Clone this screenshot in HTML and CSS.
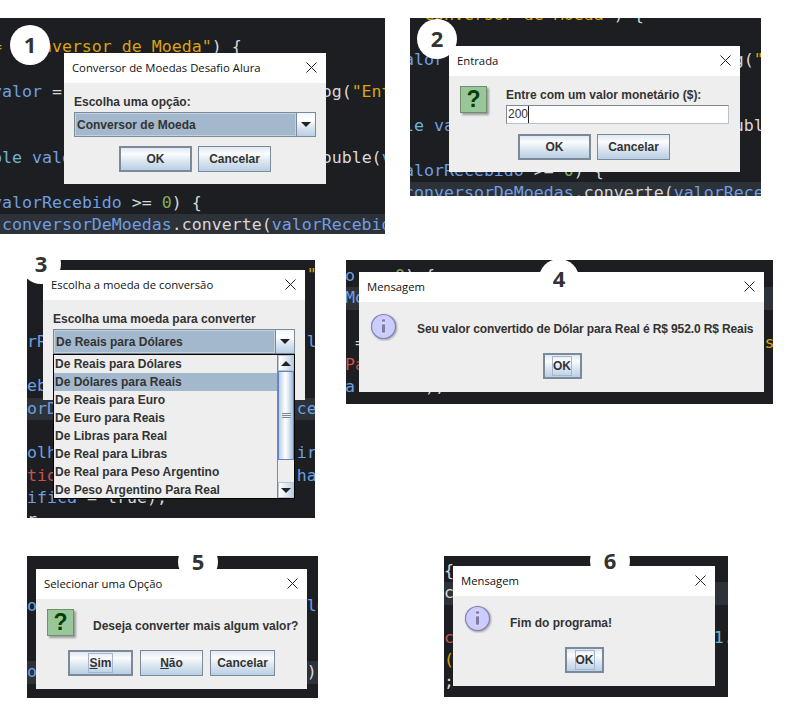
FILE: index.html
```html
<!DOCTYPE html>
<html lang="pt-BR">
<head>
    <meta charset="UTF-8">
    <meta name="viewport" content="width=device-width, initial-scale=1.0">
    <title>Conversor de Moedas - Passo a passo</title>
    <link rel="stylesheet" href="styles.css">
</head>
<body>
    <div class="row row-1">
        <!-- Passo 1 -->
        <div class="shot shot-1">
            <div class="code"><pre><span class="str">   == "Conversor de Moeda"</span>) {

    <span class="var">valor</span> = JOptionPane.showInputDialog(<span class="str">"Entre com um valor"</span>);


 <span class="kw">double</span> <span class="var">valorRecebido</span> = Double.parseDouble(<span class="var">valor</span>);

if (<span class="var">valorRecebido</span> &gt;= <span class="num">0</span>) {
<span class="hl">     <span class="var">conversorDeMoedas</span>.converte(<span class="var">valorRecebido</span>);</span></pre></div>
            <div class="badge">1</div>
            <div class="dialog">
                <div class="titlebar">
                    <span>Conversor de Moedas Desafio Alura</span>
                    <svg class="close" viewBox="0 0 11 11"><path d="M0.5 0.5 10.5 10.5M10.5 0.5 0.5 10.5"/></svg>
                </div>
                <div class="body">
                    <div class="label">Escolha uma opção:</div>
                    <div class="combo">
                        <div class="combo-value">Conversor de Moeda</div>
                        <div class="combo-arrow"><i></i></div>
                    </div>
                    <div class="buttons">
                        <button class="btn btn-wide btn-default">OK</button>
                        <button class="btn btn-wide">Cancelar</button>
                    </div>
                </div>
            </div>
        </div>

        <!-- Passo 2 -->
        <div class="shot shot-2">
            <div class="code"><pre><span class="str">   == "Conversor de Moeda"</span>) {

    <span class="var">valor</span> = JOptionPane.showInputDialog(<span class="str">"Entre com um valor"</span>);


 <span class="kw">double</span> <span class="var">valorRecebido</span> = Double.parseDouble(<span class="var">valor</span>);

if (<span class="var">valorRecebido</span> &gt;= <span class="num">0</span>) {
<span class="hl">     <span class="var">conversorDeMoedas</span>.converte(<span class="var">valorRecebido</span>);</span></pre></div>
            <div class="badge">2</div>
            <div class="dialog">
                <div class="titlebar">
                    <span>Entrada</span>
                    <svg class="close" viewBox="0 0 11 11"><path d="M0.5 0.5 10.5 10.5M10.5 0.5 0.5 10.5"/></svg>
                </div>
                <div class="body">
                    <div class="message-row">
                        <div class="icon-question">?</div>
                        <div class="input-col">
                            <div class="label">Entre com um valor monetário ($):</div>
                            <div class="input"><span class="input-text">200</span></div>
                        </div>
                    </div>
                    <div class="buttons">
                        <button class="btn btn-wide btn-default">OK</button>
                        <button class="btn btn-wide">Cancelar</button>
                    </div>
                </div>
            </div>
        </div>
    </div>

    <div class="row row-2">
        <!-- Passo 3 -->
        <div class="shot shot-3">
            <div class="code"><pre>                            <span class="str">"</span>


<span class="var">rR</span>                          <span class="var">l</span>

<span class="var">eb</span>
<span class="hl"><span class="var">orD</span>                        <span class="var">ce</span></span>
<span class="var">olh</span>                        <span class="var">ir</span>
<span class="red">tio</span>                        <span class="var">ha</span>
<span class="var">ifica</span> = true);
<span class="plain">r</span></pre></div>
            <div class="badge">3</div>
            <div class="dialog">
                <div class="titlebar">
                    <span>Escolha a moeda de conversão</span>
                    <svg class="close" viewBox="0 0 11 11"><path d="M0.5 0.5 10.5 10.5M10.5 0.5 0.5 10.5"/></svg>
                </div>
                <div class="body">
                    <div class="label">Escolha uma moeda para converter</div>
                    <div class="combo">
                        <div class="combo-value">De Reais para Dólares</div>
                        <div class="combo-arrow"><i></i></div>
                    </div>
                </div>
                <div class="popup">
                    <ul class="popup-list">
                        <li>De Reais para Dólares</li>
                        <li class="selected">De Dólares para Reais</li>
                        <li>De Reais para Euro</li>
                        <li>De Euro para Reais</li>
                        <li>De Libras para Real</li>
                        <li>De Real para Libras</li>
                        <li>De Real para Peso Argentino</li>
                        <li>De Peso Argentino Para Real</li>
                    </ul>
                    <div class="scrollbar">
                        <div class="scroll-btn"><i class="arrow-up"></i></div>
                        <div class="scroll-track">
                            <div class="scroll-thumb"><i></i></div>
                        </div>
                        <div class="scroll-btn"><i class="arrow-down"></i></div>
                    </div>
                </div>
            </div>
        </div>

        <!-- Passo 4 -->
        <div class="shot shot-4">
            <div class="code"><pre><span class="var">o</span> &gt;= <span class="num">0</span>) {
<span class="hl"><span class="var">Moedas</span>.converte(<span class="var">valorRecebido</span>);</span>
 = <span class="str">"Seu valor convertido de Euro para Reais</span>
<span class="red">Pa</span>
<span class="var">a</span>       );</pre></div>
            <div class="badge">4</div>
            <div class="dialog">
                <div class="titlebar">
                    <span>Mensagem</span>
                    <svg class="close" viewBox="0 0 11 11"><path d="M0.5 0.5 10.5 10.5M10.5 0.5 0.5 10.5"/></svg>
                </div>
                <div class="body">
                    <div class="message-row">
                        <svg class="icon-info" viewBox="0 0 28 28">
                            <circle cx="13.5" cy="13.5" r="12" />
                            <path class="icon-info-bar" d="M11.5 6h4v3h-4zM11.5 11h4v9h-4z"/>
                        </svg>
                        <div class="message">Seu valor convertido de Dólar para Real é R$ 952.0 R$ Reais</div>
                    </div>
                    <div class="buttons">
                        <button class="btn btn-small btn-default"><span class="focus">OK</span></button>
                    </div>
                </div>
            </div>
        </div>
    </div>

    <div class="row row-3">
        <!-- Passo 5 -->
        <div class="shot shot-5">
            <div class="code"><pre>


<span class="var">o</span>                           <span class="var">lo</span>


<span class="hl"><span class="var">oc</span>                          <span class="plain">);</span></span></pre></div>
            <div class="badge">5</div>
            <div class="dialog">
                <div class="titlebar">
                    <span>Selecionar uma Opção</span>
                    <svg class="close" viewBox="0 0 11 11"><path d="M0.5 0.5 10.5 10.5M10.5 0.5 0.5 10.5"/></svg>
                </div>
                <div class="body">
                    <div class="message-row">
                        <div class="icon-question">?</div>
                        <div class="message">Deseja converter mais algum valor?</div>
                    </div>
                    <div class="buttons">
                        <button class="btn btn-sim btn-default"><span class="focus"><u>S</u>im</span></button>
                        <button class="btn btn-nao"><u>N</u>ão</button>
                        <button class="btn btn-cancel">Cancelar</button>
                    </div>
                </div>
            </div>
        </div>

        <!-- Passo 6 -->
        <div class="shot shot-6">
            <div class="code"><pre><span class="plain">{</span>
<span class="hl"><span class="plain">c</span></span>
<span class="red">c</span>                          <span class="teal">1.</span>
<span class="str">(</span>
<span class="plain">;</span></pre></div>
            <div class="badge">6</div>
            <div class="dialog">
                <div class="titlebar">
                    <span>Mensagem</span>
                    <svg class="close" viewBox="0 0 11 11"><path d="M0.5 0.5 10.5 10.5M10.5 0.5 0.5 10.5"/></svg>
                </div>
                <div class="body">
                    <div class="message-row">
                        <svg class="icon-info" viewBox="0 0 28 28">
                            <circle cx="13.5" cy="13.5" r="12" />
                            <path class="icon-info-bar" d="M11.5 6h4v3h-4zM11.5 11h4v9h-4z"/>
                        </svg>
                        <div class="message">Fim do programa!</div>
                    </div>
                    <div class="buttons">
                        <button class="btn btn-small btn-default"><span class="focus">OK</span></button>
                    </div>
                </div>
            </div>
        </div>
    </div>
</body>
</html>
```

FILE: styles.css
```css
* {
    margin: 0;
    padding: 0;
    box-sizing: border-box;
}

body {
    background: white;
    font-family: "Liberation Sans", Arial, sans-serif;
    color: #333;
}

.row {
    display: flex;
    align-items: flex-start;
}

.row-1 {
    padding-top: 18px;
}

.row-2 {
    margin-top: 26px;
    padding-left: 27px;
}

.row-3 {
    margin-top: 38px;
    padding-left: 27px;
}

/* Prints do editor */
.shot {
    position: relative;
    background: #1c1e22;
    flex: none;
}

.shot-1 {
    width: 385px;
    height: 216px;
}

.shot-2 {
    width: 351px;
    height: 178px;
    margin-left: 25px;
}

.shot-3 {
    width: 288px;
    height: 258px;
}

.shot-4 {
    width: 427px;
    height: 144px;
    margin-left: 31px;
}

.shot-5 {
    width: 291px;
    height: 142px;
}

.shot-6 {
    width: 284px;
    height: 141px;
    margin-left: 126px;
}

.code {
    width: 100%;
    height: 100%;
    overflow: hidden;
}

.code pre {
    font-family: "DejaVu Sans Mono", monospace;
    font-size: 16.6px;
    line-height: 22.3px;
    color: #d8d8d8;
    width: 700px;
}

.shot-1 pre {
    margin: 18px 0 0 -48px;
}

.shot-2 pre {
    margin: -14px 0 0 -56px;
}

.shot-3 pre {
    margin: 4px 0 0 0;
}

.shot-4 pre {
    margin: 5px 0 0 -1px;
}

.shot-5 pre {
    margin: -6px 0 0 0;
}

.shot-6 pre {
    margin: 4px 0 0 0;
}

.hl {
    display: block;
    background: #2d3138;
}

.str {
    color: #d9a50c;
}

.var {
    color: #6f9fe0;
}

.kw {
    color: #6fb3d6;
}

.num {
    color: #86a85a;
}

.red {
    color: #c9514e;
}

.teal {
    color: #6fb6c9;
}

.plain {
    color: #d8d8d8;
}

/* Numeros */
.badge {
    position: absolute;
    z-index: 2;
    width: 40px;
    height: 40px;
    padding-bottom: 3px;
    border-radius: 50%;
    background: white;
    display: flex;
    align-items: center;
    justify-content: center;
    font-family: "Open Sans", sans-serif;
    font-weight: 700;
    font-size: 22px;
    color: #333;
}

.shot-1 .badge {
    left: 10px;
    top: 7px;
}

.shot-2 .badge {
    left: 7px;
    top: 1px;
}

.shot-3 .badge {
    left: -6px;
    top: -16px;
}

.shot-4 .badge {
    left: 193px;
    top: -1px;
}

.shot-5 .badge {
    left: 151px;
    top: -14px;
}

.shot-6 .badge {
    left: 146px;
    top: -15px;
}

/* Dialogos Swing */
.dialog {
    position: absolute;
    z-index: 1;
    display: flex;
    flex-direction: column;
    background: #eeeeee;
}

.shot-1 .dialog {
    left: 64px;
    top: 35px;
    width: 262px;
    height: 131px;
}

.shot-2 .dialog {
    left: 39px;
    top: 28px;
    width: 291px;
    height: 126px;
}

.shot-3 .dialog {
    left: 16px;
    top: 10px;
    width: 262px;
    height: 130px;
}

.shot-4 .dialog {
    left: 13px;
    top: 12px;
    width: 405px;
    height: 120px;
}

.shot-5 .dialog {
    left: 9px;
    top: 13px;
    width: 271px;
    height: 120px;
}

.shot-6 .dialog {
    left: 9px;
    top: 10px;
    width: 262px;
    height: 120px;
}

.titlebar {
    height: 30px;
    flex: none;
    background: white;
    display: flex;
    align-items: center;
    justify-content: space-between;
    padding: 0 9px 2px 8px;
    font-family: "Open Sans", sans-serif;
    font-size: 11.3px;
    color: #111;
}

.close {
    width: 11px;
    height: 11px;
    fill: none;
    stroke: #222;
    stroke-width: 1;
}

.body {
    flex: 1;
    padding: 12px 10px 0;
    font-size: 12px;
    font-weight: 700;
}

.label {
    line-height: 14px;
}

.combo {
    display: flex;
    height: 25px;
    margin-top: 3px;
    border: 1px solid #7a8a99;
}

.combo-value {
    flex: 1;
    background: #a3b8cc;
    border: 1px solid #c3d0dd;
    padding-left: 1px;
    line-height: 22px;
}

.combo-arrow {
    width: 19px;
    border-left: 1px solid #7a8a99;
    background: linear-gradient(#f2f6fa, #fff 30%, #dbe6f0 60%, #b8cfe5);
    display: flex;
    align-items: center;
    justify-content: center;
}

.combo-arrow i,
.arrow-down {
    display: block;
    border-left: 5px solid transparent;
    border-right: 5px solid transparent;
    border-top: 5px solid #222;
}

.buttons {
    display: flex;
    justify-content: center;
    gap: 6px;
    margin-top: 9px;
}

.btn {
    height: 26px;
    border: 1px solid #7a8a99;
    background: linear-gradient(#dfe8f1, #fbfcfd 28%, #dde7f1 58%, #b8cfe5);
    font-family: "Liberation Sans", Arial, sans-serif;
    font-size: 12px;
    font-weight: 700;
    color: #333;
}

.btn-default {
    border-width: 2px;
}

.btn-wide {
    width: 73px;
}

.btn-small {
    width: 39px;
}

.btn-sim {
    width: 65px;
}

.btn-nao {
    width: 63px;
}

.btn-cancel {
    width: 65px;
}

.focus {
    border: 1px solid #a3b8cc;
    padding: 2px 0;
}

/* Mensagem com icone */
.message-row {
    display: flex;
}

.shot-2 .body {
    padding: 10px 12px 0 11px;
}

.icon-question {
    width: 27px;
    height: 27px;
    flex: none;
    background: #9ac79a;
    border: 1px solid #6f8f6f;
    box-shadow: 2px 2px 2px rgba(0, 0, 0, 0.35);
    color: #064006;
    font-size: 23px;
    line-height: 25px;
    text-align: center;
}

.input-col {
    flex: 1;
    margin-left: 19px;
    margin-right: -1px;
    padding-top: 2px;
}

.input {
    height: 19px;
    margin-top: 3px;
    background: white;
    border: 1px solid #b8c2cc;
    border-top-color: #7a8a99;
    border-left-color: #7a8a99;
    font-weight: 400;
    line-height: 17px;
    padding-left: 1px;
}

.input-text {
    display: inline-block;
    height: 17px;
    border-right: 1px solid #222;
}

.shot-2 .buttons {
    margin-top: 10px;
}

.icon-info {
    width: 28px;
    height: 28px;
    flex: none;
}

.icon-info circle {
    fill: #ccccff;
    stroke: #8383b5;
    stroke-width: 1.2;
    filter: drop-shadow(1px 1px 1px rgba(0, 0, 0, 0.35));
}

.icon-info-bar {
    fill: #7c7c9e;
    stroke: #fff;
    stroke-width: 0.5;
}

.message {
    line-height: 14px;
    white-space: nowrap;
}

.shot-4 .body {
    padding: 11px 10px 0 11px;
}

.shot-4 .message {
    margin: 9px 0 0 19px;
    letter-spacing: -0.12px;
}

.shot-4 .buttons {
    margin-top: 12px;
}

.shot-5 .body {
    padding: 10px 11px 0;
}

.shot-5 .message {
    margin: 10px 0 0 19px;
}

.shot-5 .buttons {
    margin-top: 14px;
    gap: 7px;
}

.shot-6 .body {
    padding: 9px 10px 0 11px;
}

.shot-6 .message {
    margin: 11px 0 0 18px;
}

.shot-6 .buttons {
    margin-top: 14px;
}

/* Lista aberta do combo */
.popup {
    position: absolute;
    left: 10px;
    top: 84px;
    width: 242px;
    height: 145px;
    background: #eeeeee;
    border: 1px solid black;
    display: flex;
    font-size: 12px;
    font-weight: 700;
}

.popup-list {
    flex: 1;
    list-style: none;
}

.popup-list li {
    height: 18px;
    line-height: 18px;
    padding-left: 1px;
}

.popup-list .selected {
    background: #a3b8cc;
}

.scrollbar {
    width: 17px;
    display: flex;
    flex-direction: column;
    border-left: 1px solid #7a8a99;
}

.scroll-btn {
    height: 16px;
    flex: none;
    background: linear-gradient(90deg, #fff, #e3ebf3 50%, #b8cfe5);
    border: 1px solid #b8c6d4;
    display: flex;
    align-items: center;
    justify-content: center;
}

.arrow-up {
    display: block;
    border-left: 5px solid transparent;
    border-right: 5px solid transparent;
    border-bottom: 5px solid #222;
}

.scroll-track {
    flex: 1;
    background: #eeeeee;
}

.scroll-thumb {
    height: 89px;
    background: linear-gradient(90deg, #b8cfe5, #fff 45%, #dbe6f0 70%, #9fbbdc);
    border: 1px solid #6382bf;
    display: flex;
    align-items: center;
    justify-content: center;
}

.scroll-thumb i {
    display: block;
    width: 9px;
    height: 5px;
    border-top: 1px solid #7a8a99;
    border-bottom: 1px solid #7a8a99;
    background: linear-gradient(#eeeeee 1px, #7a8a99 1px, #7a8a99 2px, #eeeeee 2px);
}
```
